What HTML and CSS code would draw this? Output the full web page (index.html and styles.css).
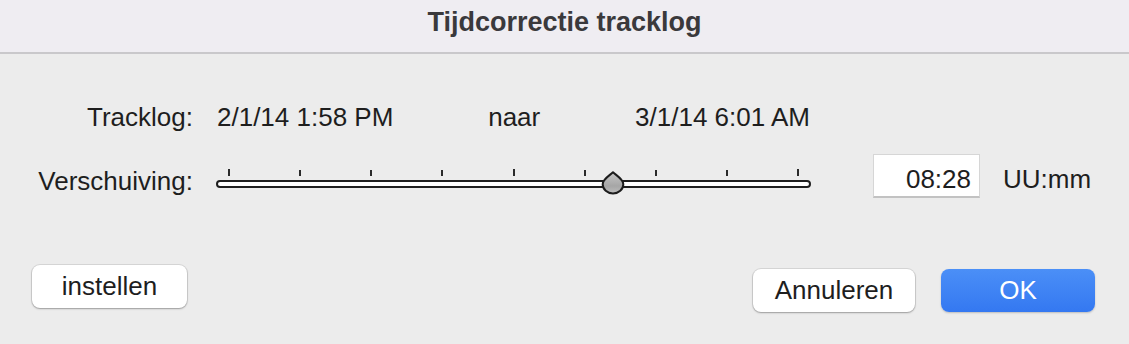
FILE: index.html
```html
<!DOCTYPE html>
<html>
<head>
<meta charset="utf-8">
<link rel="stylesheet" href="styles.css">
</head>
<body>
<div class="titlebar"><span class="title">Tijdcorrectie tracklog</span></div>
<div class="form">
  <div class="label row1">Tracklog:</div>
  <div class="range row1"><span>2/1/14 1:58 PM</span><span>naar</span><span>3/1/14 6:01 AM</span></div>
  <div></div>
  <div></div>
  <div class="label row2">Verschuiving:</div>
  <div class="slider">
    <div class="ticks"><i></i><i></i><i></i><i></i><i></i><i></i><i></i><i></i><i></i></div>
    <div class="track"></div>
    <svg class="knob" width="24" height="24" viewBox="0 0 24 24">
      <defs>
        <linearGradient id="kg" x1="0" y1="0" x2="0" y2="1">
          <stop offset="0" stop-color="#c6c6c6"/>
          <stop offset="0.65" stop-color="#a6a6a6"/>
          <stop offset="1" stop-color="#bcbcbc"/>
        </linearGradient>
      </defs>
      <path d="M12 1.2 C14.5 4 22.3 8 22.3 13.2 A10.3 9.3 0 0 1 1.7 13.2 C1.7 8 9.5 4 12 1.2 Z" fill="url(#kg)" stroke="#1c1c1c" stroke-width="2" stroke-linejoin="round"/>
    </svg>
  </div>
  <div class="fieldcell"><div class="field">08:28</div></div>
  <div class="unit">UU:mm</div>
</div>
<div class="footer">
  <button class="btn set">instellen</button>
  <div class="right">
    <button class="btn">Annuleren</button>
    <button class="btn primary">OK</button>
  </div>
</div>
</body>
</html>
```
FILE: styles.css
```css
html, body {
  margin: 0;
  padding: 0;
}
body {
  width: 1129px;
  height: 344px;
  overflow: hidden;
  background: #ececec;
  font-family: "Liberation Sans", Arial, sans-serif;
  color: #1e1e1e;
  font-size: 26px;
}
.titlebar {
  box-sizing: border-box;
  height: 54px;
  background: #efedf2;
  border-bottom: 2px solid #c9c8cb;
  display: flex;
  align-items: center;
  justify-content: center;
}
.title {
  font-weight: bold;
  font-size: 27px;
  color: #3a393c;
  margin-top: -8px;
}
.form {
  display: grid;
  grid-template-columns: 193px 595px 146px auto;
  column-gap: 23px;
  row-gap: 22px;
  margin-top: 48px;
}
.label {
  text-align: right;
  line-height: 30px;
}
.row1 {
  line-height: 30px;
}
.range {
  display: flex;
  justify-content: space-between;
  padding-right: 1px;
  padding-left: 1px;
}
.label.row2 {
  margin-top: 12px;
}
.slider {
  position: relative;
  height: 44px;
}
.ticks {
  display: flex;
  justify-content: space-between;
  padding: 0 12px 0 12px;
  margin-top: 16px;
  height: 6px;
}
.ticks i {
  display: block;
  width: 2px;
  height: 6px;
  background: #2a2a2a;
}
.ticks i:first-child, .ticks i:nth-child(5), .ticks i:last-child {
  height: 7px;
  margin-top: -1px;
}
.track {
  box-sizing: border-box;
  height: 8px;
  margin-top: 4px;
  border: 2px solid #1e1e1e;
  border-radius: 4px;
  background: #ffffff;
}
.knob {
  position: absolute;
  left: 385px;
  top: 17px;
}
.fieldcell {
  display: flex;
  justify-content: flex-end;
}
.field {
  box-sizing: border-box;
  width: 107px;
  height: 44px;
  background: #ffffff;
  border: 1px solid #d6d6d6;
  border-bottom: 2px solid #c2c2c2;
  text-align: right;
  padding: 9px 8px 0 0;
  line-height: 30px;
}
.unit {
  line-height: 30px;
  margin-top: 10px;
}
.footer {
  display: flex;
  justify-content: space-between;
  align-items: flex-start;
  padding: 0 34px 0 32px;
  margin-top: 67px;
}
.right {
  display: flex;
  gap: 26px;
  margin-top: 4px;
}
.btn {
  font-family: "Liberation Sans", Arial, sans-serif;
  font-size: 26px;
  color: #1e1e1e;
  height: 43px;
  border: none;
  border-radius: 8px;
  background: #ffffff;
  box-shadow: 0 0 0 1px rgba(0, 0, 0, 0.09), 0 1px 2px rgba(0, 0, 0, 0.28);
  padding: 0;
  line-height: 43px;
}
.set {
  width: 155px;
}
.right .btn {
  width: 162px;
}
.right .primary {
  width: 154px;
  color: #ffffff;
  background: linear-gradient(#4b8ff7, #3478f1);
  box-shadow: 0 1px 2px rgba(0, 0, 0, 0.2);
}
```
